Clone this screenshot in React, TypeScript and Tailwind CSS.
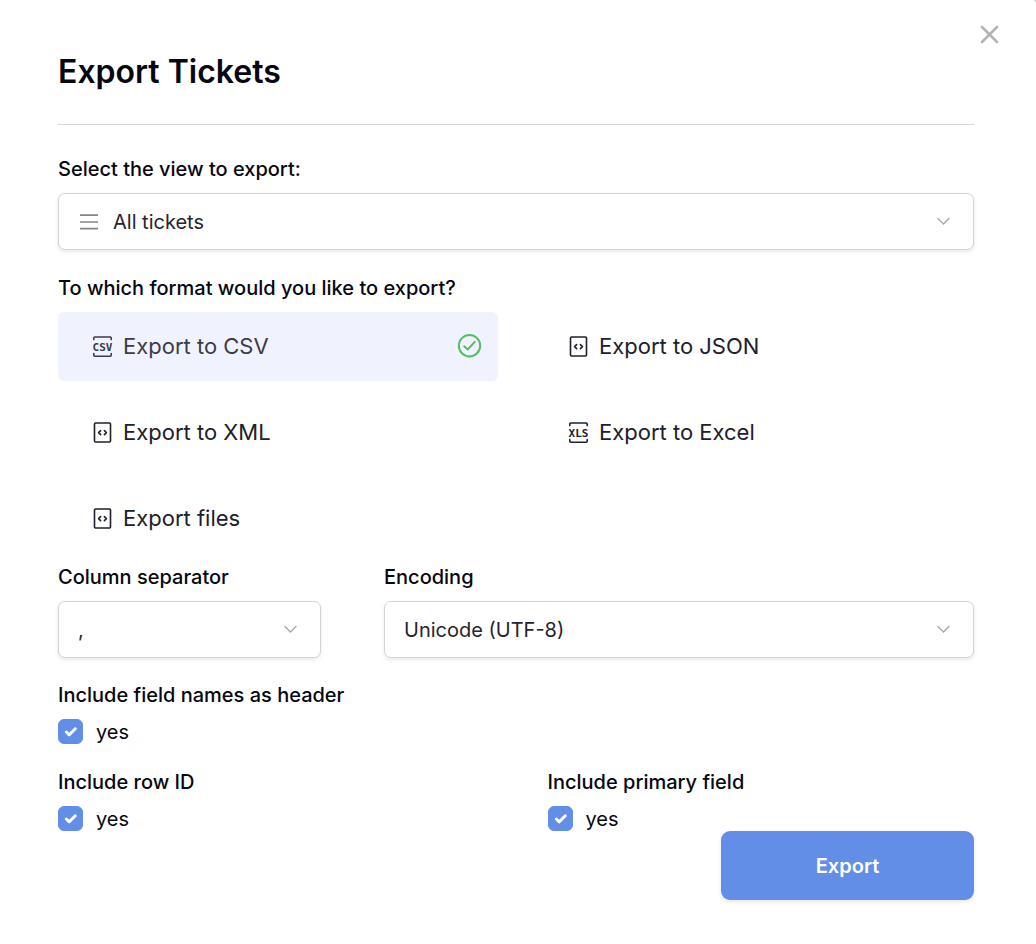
import React, { useState } from 'react';

type IconKind = 'csv' | 'xls' | 'code';

const formats: { id: string; label: string; icon: IconKind }[] = [
  { id: 'csv', label: 'Export to CSV', icon: 'csv' },
  { id: 'json', label: 'Export to JSON', icon: 'code' },
  { id: 'xml', label: 'Export to XML', icon: 'code' },
  { id: 'excel', label: 'Export to Excel', icon: 'xls' },
  { id: 'files', label: 'Export files', icon: 'code' },
];

function FormatIcon({ kind }: { kind: IconKind }) {
  if (kind === 'code') {
    return (
      <svg width="19" height="22" viewBox="0 0 19 22" fill="none" stroke="currentColor" strokeWidth="1.6" strokeLinecap="round" strokeLinejoin="round" aria-hidden="true">
        <rect x="1.5" y="1" width="16" height="19" rx="1" />
        <path d="M7.6 8.6 L5.6 10.6 L7.6 12.6 M11.4 8.6 L13.4 10.6 L11.4 12.6" />
      </svg>
    );
  }
  return (
    <svg width="19" height="22" viewBox="0 0 19 22" fill="none" stroke="currentColor" strokeWidth="1.6" strokeLinecap="round" strokeLinejoin="round" className="overflow-visible" aria-hidden="true">
      <path d="M0.8 3.6 V2 Q0.8 1 1.8 1 H17.2 Q18.2 1 18.2 2 V3.6" />
      <path d="M0.8 17.6 V19.2 Q0.8 20.2 1.8 20.2 H17.2 Q18.2 20.2 18.2 19.2 V17.6" />
      <text x="9.5" y="14.6" textAnchor="middle" fontSize="11" fontWeight="700" fill="currentColor" stroke="none" className="font-['DejaVu_Sans_Mono',monospace]">
        {kind === 'csv' ? 'CSV' : 'XLS'}
      </text>
    </svg>
  );
}

interface SelectFieldProps {
  id: string;
  options: string[];
  withIcon?: boolean;
}

function SelectField({ id, options, withIcon }: SelectFieldProps) {
  return (
    <div className="relative mt-3">
      {withIcon && (
        <svg className="pointer-events-none absolute left-[21px] top-5" width="20" height="18" viewBox="0 0 20 18" stroke="#858585" strokeWidth="1.7" aria-hidden="true">
          <path d="M1 2.2 H19 M1 9 H19 M1 15.6 H19" />
        </svg>
      )}
      <select
        id={id}
        className={`block h-[57px] w-full appearance-none rounded-[7px] border border-[#d3d3d5] bg-white pr-14 text-xl text-[#25252d] shadow-[0_2px_4px_rgba(0,0,0,0.09)] ${withIcon ? 'pl-[54px]' : 'pl-[19px]'}`}
      >
        {options.map((o) => (
          <option key={o}>{o}</option>
        ))}
      </select>
      <svg className="pointer-events-none absolute right-6 top-6" width="13" height="9" viewBox="0 0 13 9" fill="none" stroke="#aaaaaa" strokeWidth="1.5" strokeLinecap="round" strokeLinejoin="round" aria-hidden="true">
        <path d="M1 1.5 L6.5 7 L12 1.5" />
      </svg>
    </div>
  );
}

function CheckField({ title }: { title: string }) {
  const [checked, setChecked] = useState(true);

  return (
    <fieldset>
      <legend className="text-xl leading-6 font-medium">{title}</legend>
      <label className="mt-3 flex h-[25px] w-fit items-center gap-[13px] text-xl">
        <span className="relative block size-[25px]">
          <input
            type="checkbox"
            checked={checked}
            onChange={(e) => setChecked(e.target.checked)}
            className="block size-[25px] appearance-none rounded-[6px] border border-[#628ee8] bg-white checked:bg-[#628ee8]"
          />
          {checked && (
            <svg className="pointer-events-none absolute inset-0" width="25" height="25" viewBox="0 0 25 25" fill="none" stroke="white" strokeWidth="3" strokeLinecap="round" strokeLinejoin="round" aria-hidden="true">
              <path d="M8.3 13 L11.3 15.8 L17.3 9.8" />
            </svg>
          )}
        </span>
        yes
      </label>
    </fieldset>
  );
}

export default function App() {
  const [format, setFormat] = useState('csv');

  return (
    <div className="bg-[#c8c8c8] font-['Inter',sans-serif] text-[#070710]">
      <main className="relative min-h-screen rounded-tr-[4px] bg-white pt-[52px] pr-[62px] pb-11 pl-[58px]">
        <button type="button" aria-label="Close" className="absolute top-[25px] right-[37px]">
          <svg width="19" height="19" viewBox="0 0 19 19" stroke="#b3b3b5" strokeWidth="2.6" strokeLinecap="round" aria-hidden="true">
            <path d="M2 2 L17 17 M17 2 L2 17" />
          </svg>
        </button>

        <h1 className="border-b border-[#d6d6d6] pb-8 text-[32px] leading-10 font-semibold">Export Tickets</h1>

        <form onSubmit={(e) => e.preventDefault()}>
          <div className="mt-8">
            <label htmlFor="view" className="block text-xl leading-6 font-medium">Select the view to export:</label>
            <SelectField id="view" options={['All tickets']} withIcon />
          </div>

          <fieldset className="mt-[26px]">
            <legend className="text-xl leading-6 font-medium">To which format would you like to export?</legend>
            <div className="mt-3 grid grid-cols-2 gap-x-9 gap-y-[17px]">
              {formats.map((f) => (
                <label
                  key={f.id}
                  className={`relative flex h-[69px] cursor-pointer items-center gap-[11px] rounded-[6px] pr-4 pl-[35px] text-[22px] ${format === f.id ? 'bg-[#f0f3fd] text-[#3c3c46]' : 'text-[#20202a]'}`}
                >
                  <input
                    type="radio"
                    name="format"
                    value={f.id}
                    checked={format === f.id}
                    onChange={() => setFormat(f.id)}
                    className="sr-only"
                  />
                  <FormatIcon kind={f.icon} />
                  {f.label}
                  {format === f.id && (
                    <svg className="ml-auto" width="25" height="25" viewBox="0 0 25 25" fill="none" stroke="#53bf62" strokeWidth="2" strokeLinecap="round" strokeLinejoin="round" aria-hidden="true">
                      <circle cx="12.5" cy="11.7" r="10.7" />
                      <path d="M7.2 12.2 L10.7 15.5 L17.8 7.9" />
                    </svg>
                  )}
                </label>
              ))}
            </div>
          </fieldset>

          <div className="mt-3 grid grid-cols-[263fr_590fr] gap-x-[63px]">
            <div>
              <label htmlFor="separator" className="block text-xl leading-6 font-medium">Column separator</label>
              <SelectField id="separator" options={[',', ';', '|']} />
            </div>
            <div>
              <label htmlFor="encoding" className="block text-xl leading-6 font-medium">Encoding</label>
              <SelectField id="encoding" options={['Unicode (UTF-8)', 'Western (ISO-8859-1)']} />
            </div>
          </div>

          <div className="mt-[25px]">
            <CheckField title="Include field names as header" />
          </div>
          <div className="mt-[26px] grid grid-cols-2 gap-x-[63px]">
            <CheckField title="Include row ID" />
            <CheckField title="Include primary field" />
          </div>

          <div className="flex justify-end">
            <button type="submit" className="h-[69px] w-[253px] rounded-[9px] bg-[#628ee8] text-xl font-semibold text-white shadow-[0_2px_4px_rgba(0,0,0,0.1)]">
              Export
            </button>
          </div>
        </form>
      </main>
    </div>
  );
}
